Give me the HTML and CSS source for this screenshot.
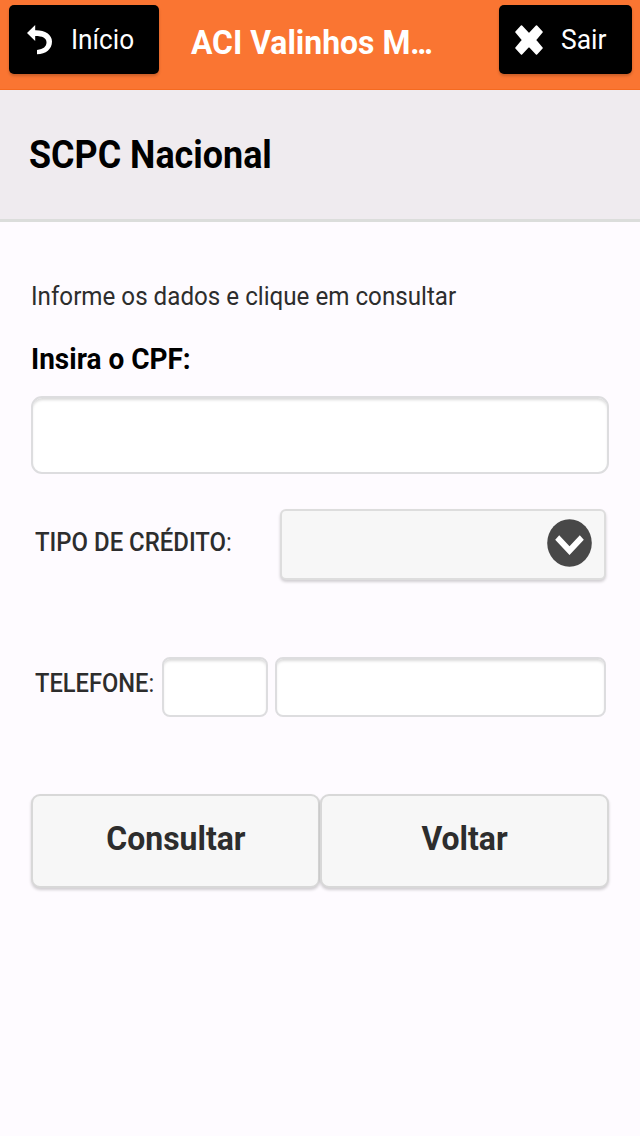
FILE: index.html
```html
<!DOCTYPE html>
<html lang="pt-BR">
<head>
<meta charset="utf-8">
<title>SCPC Nacional</title>
<link rel="stylesheet" href="styles.css">
</head>
<body>
<header class="topbar">
  <a class="nav-button nav-home">
    <svg class="icon-back" width="25" height="30" viewBox="0 0 25 30"><path d="M0 8 8.200 0v5.200C18 5 25 9.500 25 16.500 25 24 19 29.300 10 29.300L10 25C16.500 24.300 19.500 21.500 19.500 17.300 19.500 13 15.500 11 8.200 11v5Z" fill="#fff"/></svg>
    <span class="nav-label squeeze">Início</span>
  </a>
  <h1 class="app-title squeeze">ACI Valinhos M<span class="dots">...</span></h1>
  <a class="nav-button nav-exit">
    <svg class="icon-close" width="28" height="30" viewBox="0 0 28 30"><path d="M6.500 1 14 9 21.500 1 27 7 20.300 15 27 23 21.500 29 14 21 6.500 29 1 23 7.700 15 1 7Z" fill="#fff" stroke="#fff" stroke-width="1.600" stroke-linejoin="round"/></svg>
    <span class="nav-label squeeze">Sair</span>
  </a>
</header>
<section class="page-heading"><h2 class="page-title squeeze">SCPC Nacional</h2></section>
<main class="form">
  <p class="hint squeeze">Informe os dados e clique em consultar</p>
  <label class="cpf-label squeeze" for="cpf">Insira o CPF:</label>
  <input class="field field-cpf" id="cpf">
  <div class="row row-credit">
    <span class="row-label label-credit squeeze"><b>TIPO DE CRÉDITO</b>:</span>
    <div class="select">
      <svg width="45" height="48" viewBox="0 0 45 48"><ellipse cx="22.500" cy="24" rx="22.300" ry="23.700" fill="#484848"/><path d="M12.200 16.200 22.500 27.300 32.800 16.200 36.800 20.800 22.500 36 8.200 20.800Z" fill="#fff"/></svg>
    </div>
  </div>
  <div class="row row-phone">
    <span class="row-label label-phone squeeze"><b>TELEFONE</b>:</span>
    <div class="phone-fields"><input class="field field-ddd"><input class="field field-phone"></div>
  </div>
  <div class="actions">
    <button class="action"><span class="action-label">Consultar</span></button>
    <button class="action"><span class="action-label">Voltar</span></button>
  </div>
</main>
</body>
</html>
```
FILE: styles.css
```css
* { box-sizing: border-box; }
body { margin: 0; min-height: 1136px; background: #fefbff; color: #2d2d2d; font-family: Roboto, "Liberation Sans", sans-serif; }
h1, h2, p { margin: 0; }
.squeeze { display: block; width: max-content; white-space: nowrap; transform-origin: 0 0; }
.topbar { display: flex; align-items: flex-start; height: 90px; padding: 5px 8px 0 9px; background: #fa7532; border-bottom: 1px solid #f56a20; }
.nav-button { display: flex; flex: none; height: 69px; border-radius: 5px; background: #000; box-shadow: 0 2px 3px rgba(0,0,0,.2); }
.nav-home { width: 150px; padding: 20px 0 0 18px; }
.nav-exit { width: 133px; padding: 20px 0 0 16px; }
.nav-label { margin: -1px 0 0 18px; color: #fff; font-size: 27px; line-height: 32px; transform: scaleX(.98); }
.nav-home .nav-label { margin-left: 19px; transform: scaleX(.97); }
.app-title { width: 340px; padding-left: 33px; color: #fff; font-size: 33px; line-height: 76px; transform: scaleX(.967); }
.dots { letter-spacing: -2.5px; }
.page-heading { height: 132px; padding: 42px 29px 0; background: #efebef; border-bottom: 3px solid #dbdddb; }
.page-title { color: #000; font-size: 39px; line-height: 46px; transform: scaleX(.92); }
.form { padding: 59px 31px 0; }
.hint { font-size: 26px; line-height: 30px; transform: scaleX(.93); }
.cpf-label { margin-top: 31px; color: #000; font-weight: 700; font-size: 29px; line-height: 34px; transform: scaleX(.965); }
.field { display: block; padding: 0; border: 2px solid #dddddf; border-radius: 8px; background: #fff; box-shadow: inset 0 3px 3px -1px rgba(0,0,0,.15); }
.field-cpf { width: 578px; height: 78px; margin-top: 20px; border-radius: 11px; }
.row { display: flex; justify-content: space-between; padding: 0 3px 0 4px; font-size: 26px; line-height: 30px; }
.row b { font-weight: 500; }
.row-credit { height: 71px; margin-top: 35px; }
.label-credit { padding-top: 18px; transform: scaleX(.92); }
.select { display: flex; justify-content: flex-end; width: 326px; height: 71px; padding: 8px 12px; border: 2px solid #ddd; border-radius: 6px; background: #f7f7f7; box-shadow: 0 2px 3px rgba(0,0,0,.18); }
.row-phone { height: 60px; margin-top: 77px; }
.label-phone { width: 120px; padding-top: 11px; transform: scaleX(.91); }
.phone-fields { display: flex; gap: 7px; }
.field-ddd { width: 106px; height: 60px; }
.field-phone { width: 331px; height: 60px; }
.actions { display: flex; margin-top: 77px; }
.action { width: 289px; height: 94px; padding: 0 0 5px; border: 2px solid #d8d8d8; border-radius: 9px; background: #f7f7f7; color: #2d2d2d; font: 700 33px Roboto, "Liberation Sans", sans-serif; box-shadow: 0 2px 3px rgba(0,0,0,.18); }
.action-label { display: inline-block; transform: scaleX(.968); }
```
